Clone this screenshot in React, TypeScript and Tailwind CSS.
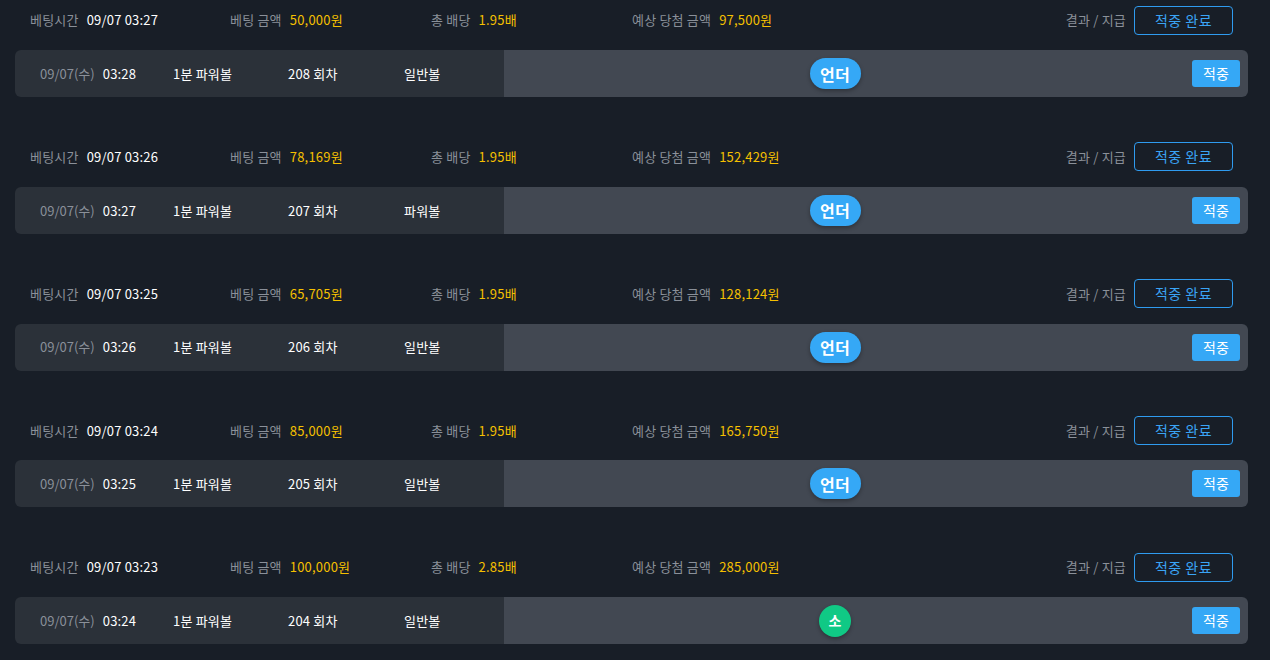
import React from "react";

type Bet = {
    betTime: string;
    amount: string;
    odds: string;
    expected: string;
    date: string;
    time: string;
    game: string;
    round: string;
    kind: string;
    pick: "under" | "small";
};

const bets: Bet[] = [
    { betTime: "09/07 03:27", amount: "50,000원", odds: "1.95배", expected: "97,500원", date: "09/07(수)", time: "03:28", game: "1분 파워볼", round: "208 회차", kind: "일반볼", pick: "under" },
    { betTime: "09/07 03:26", amount: "78,169원", odds: "1.95배", expected: "152,429원", date: "09/07(수)", time: "03:27", game: "1분 파워볼", round: "207 회차", kind: "파워볼", pick: "under" },
    { betTime: "09/07 03:25", amount: "65,705원", odds: "1.95배", expected: "128,124원", date: "09/07(수)", time: "03:26", game: "1분 파워볼", round: "206 회차", kind: "일반볼", pick: "under" },
    { betTime: "09/07 03:24", amount: "85,000원", odds: "1.95배", expected: "165,750원", date: "09/07(수)", time: "03:25", game: "1분 파워볼", round: "205 회차", kind: "일반볼", pick: "under" },
    { betTime: "09/07 03:23", amount: "100,000원", odds: "2.85배", expected: "285,000원", date: "09/07(수)", time: "03:24", game: "1분 파워볼", round: "204 회차", kind: "일반볼", pick: "small" },
];

function BetBlock({ bet }: { bet: Bet }) {
    return (
        <div className="mb-[39.75px]">
            {/* header line */}
            <div className="flex items-center h-10 pl-[15px] pr-[15px] text-[13px] tracking-[0.2px]">
                <div className="w-[200px] flex items-center gap-2">
                    <span className="text-[#8a9099]">베팅시간</span>
                    <span className="text-white">{bet.betTime}</span>
                </div>
                <div className="w-[201px] flex items-center gap-2">
                    <span className="text-[#8a9099]">베팅 금액</span>
                    <span className="text-[#f5c000]">{bet.amount}</span>
                </div>
                <div className="w-[201px] flex items-center gap-2">
                    <span className="text-[#8a9099]">총 배당</span>
                    <span className="text-[#f5c000]">{bet.odds}</span>
                </div>
                <div className="flex items-center gap-2">
                    <span className="text-[#8a9099]">예상 당첨 금액</span>
                    <span className="text-[#f5c000]">{bet.expected}</span>
                </div>
                <div className="ml-auto flex items-center gap-2">
                    <span className="text-[#8a9099]">결과 / 지급</span>
                    <button className="w-[99px] h-[29px] rounded border border-[#2f9bef] text-[#3aa4f5] text-[14px] tracking-[0.5px]">
                        적중 완료
                    </button>
                </div>
            </div>

            {/* detail bar */}
            <div className="mt-[10px] h-[47px] flex rounded-md overflow-hidden text-[13px] tracking-[0.2px]">
                <div className="w-[489px] bg-[#2b3139] flex items-center pl-[25px]">
                    <div className="w-[133px] flex items-center gap-[8px]">
                        <span className="text-[#8a9099] tracking-normal">{bet.date}</span>
                        <span className="text-white">{bet.time}</span>
                    </div>
                    <span className="w-[115px] text-white">{bet.game}</span>
                    <span className="w-[116px] text-white">{bet.round}</span>
                    <span className="text-white">{bet.kind}</span>
                </div>
                <div className="flex-1 bg-[#424852] flex items-center">
                    <div className="flex-1 flex justify-center">
                        {bet.pick === "under" ? (
                            <span className="h-[31px] w-[51px] rounded-full bg-[#35a8f6] text-white font-bold text-[16px] flex items-center justify-center shadow-[0_2px_4px_rgba(0,0,0,0.3)]">
                                언더
                            </span>
                        ) : (
                            <span className="h-[32px] w-[32px] rounded-full bg-[#10c985] text-white font-bold text-[14px] flex items-center justify-center shadow-[0_2px_4px_rgba(0,0,0,0.3)]">
                                소
                            </span>
                        )}
                    </div>
                    <div className="w-[82px] flex justify-end pr-2">
                        <span className="w-[48px] h-[27px] rounded-[3px] bg-[#35a8f6] text-white text-[14px] flex items-center justify-center">
                            적중
                        </span>
                    </div>
                </div>
            </div>
        </div>
    );
}

export default function App() {
    return (
        <div
            className="min-h-screen bg-[#181e27] pl-[15px] pr-[22px]"
            style={{ fontFamily: '"Noto Sans CJK KR", "Noto Sans", sans-serif' }}
        >
            {bets.map((b) => (
                <BetBlock key={b.round} bet={b} />
            ))}
        </div>
    );
}
